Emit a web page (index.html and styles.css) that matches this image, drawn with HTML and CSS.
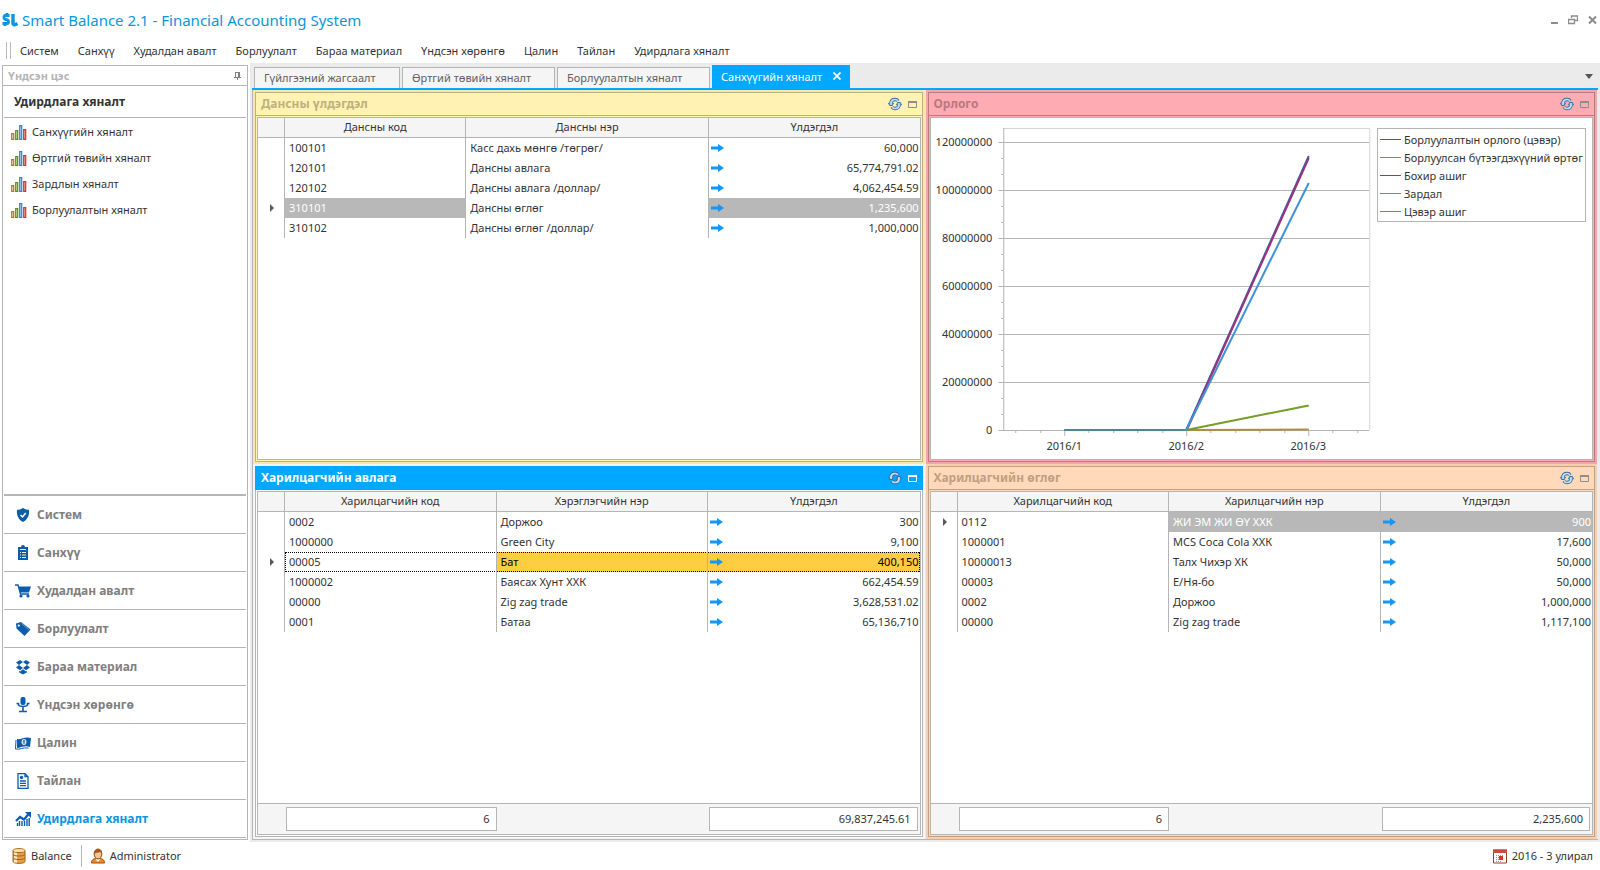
FILE: index.html
```
<!DOCTYPE html>
<html lang="mn">
<head>
    <meta charset="UTF-8">
    <meta name="viewport" content="width=device-width, initial-scale=1.0">
    <title>Smart Balance 2.1</title>
    <link rel="stylesheet" href="styles.css">
</head>
<body>
    <svg class="sprite">
        <symbol id="arrow" viewBox="0 0 13 8">
            <path d="M0 2.500h7V0l6 4-6 4V5.500H0z" fill="#1296f8"/>
        </symbol>
        <symbol id="mark" viewBox="0 0 4 8">
            <path d="M0 0l4 4-4 4z" fill="#5a5a5a"/>
        </symbol>
        <symbol id="refresh" viewBox="0 0 14 14">
            <path d="M3 9V6.500C3 4 4.500 2.500 7 2.500c1.500 0 2.500.5 3 1.500M11 5v2.500C11 10 9.500 11.500 7 11.500c-1.500 0-2.500-.5-3-1.500" fill="none" stroke="#3a6fa0" stroke-width="3.400"/>
            <path d="M0 7h6L3 3.500zM8 7h6l-3 3.500z" fill="#5e9dcc" stroke="#3a6fa0" stroke-width=".6"/>
            <path d="M3 8V6.500C3 4 4.500 2.500 7 2.500c1.500 0 2.300.5 2.800 1.200M11 6v1.500C11 10 9.500 11.500 7 11.500c-1.500 0-2.300-.5-2.800-1.200" fill="none" stroke="#c4e3fa" stroke-width="1.700"/>
        </symbol>
        <symbol id="maximize" viewBox="0 0 9 7">
            <path d="M.5 1v5.500h8V1" fill="none" stroke="currentColor"/>
            <path d="M0 0h9v2H0z" fill="currentColor"/>
        </symbol>
        <symbol id="bars" viewBox="0 0 16 15">
            <path d="M.7 8.700h2v5.600h-2z" fill="#fbe3b8" stroke="#b8742a" stroke-width="1.200"/>
            <path d="M4.700 5.700h2v8.600h-2z" fill="#c5e59a" stroke="#548f2c" stroke-width="1.200"/>
            <path d="M8.700.7h2v13.600h-2z" fill="#b5d9f8" stroke="#3f7fc4" stroke-width="1.200"/>
            <path d="M12.700 4.700h2v9.600h-2z" fill="#f3a89e" stroke="#c23b36" stroke-width="1.200"/>
        </symbol>
    </svg>

    <header class="titlebar">
        <svg class="logo" viewBox="0 0 16 14">
            <path d="M7.500 2.500H3.300C1.500 2.500 1.500 6 3.300 6.300l2 .6C7 7.500 7 10.500 5 10.500H.5M5 0v2.500M3 10v3" fill="none" stroke="#0a97dd" stroke-width="2.800"/>
            <path d="M11 1v9.500c0 1 1 1.500 2 1.200l2.500-1.200" fill="none" stroke="#0a97dd" stroke-width="3.400"/>
        </svg>
        <h1>Smart Balance 2.1 - Financial Accounting System</h1>
        <div class="window-buttons">
            <button aria-label="Minimize"><svg width="7" height="10" viewBox="0 0 7 10"><path d="M0 7h7v2H0z" fill="#8c8c8c"/></svg></button>
            <button aria-label="Restore"><svg width="10" height="10" viewBox="0 0 10 10"><path d="M3.500 3V1h6v4.500H7M.5 4.500h6v4h-6zM3 1h7M0 4.500h7" fill="none" stroke="#8c8c8c" stroke-width="1.300"/></svg></button>
            <button aria-label="Close"><svg width="9" height="10" viewBox="0 0 9 10"><path d="M1 1.500l7 7M8 1.500l-7 7" stroke="#8c8c8c" stroke-width="2"/></svg></button>
        </div>
    </header>

    <nav class="menubar">
        <a href="#">Систем</a>
        <a href="#">Санхүү</a>
        <a href="#">Худалдан авалт</a>
        <a href="#">Борлуулалт</a>
        <a href="#">Бараа материал</a>
        <a href="#">Үндсэн хөрөнгө</a>
        <a href="#">Цалин</a>
        <a href="#">Тайлан</a>
        <a href="#">Удирдлага хяналт</a>
    </nav>

    <div class="main">
        <aside class="sidebar">
            <div class="sidebar-title">
                <span>Үндсэн цэс</span>
                <button aria-label="Pin"><svg width="7" height="8" viewBox="0 0 7 8"><path d="M1.500 0v5M0 5.500h7M3.500 5v3M1.500.5H5" fill="none" stroke="#808080"/><path d="M4 0h2v5H4z" fill="#808080"/></svg></button>
            </div>
            <div class="sidebar-body">
                <h2>Удирдлага хяналт</h2>
                <ul class="links">
                    <li><a href="#"><svg><use href="#bars"/></svg>Санхүүгийн хяналт</a></li>
                    <li><a href="#"><svg><use href="#bars"/></svg>Өртгий төвийн хяналт</a></li>
                    <li><a href="#"><svg><use href="#bars"/></svg>Зардлын хяналт</a></li>
                    <li><a href="#"><svg><use href="#bars"/></svg>Борлуулалтын хяналт</a></li>
                </ul>
                <div class="groups">
                    <button>
                        <svg viewBox="0 0 16 16"><path d="M8 1c2 1.300 4 1.800 6 1.800C14.500 8 13 12.500 8 15 3 12.500 1.500 8 2 2.800 4 2.800 6 2.300 8 1z"/><path d="M5.500 8l2 2 3.200-4" fill="none" stroke="#fff" stroke-width="1.500"/></svg>
                        Систем
                    </button>
                    <button>
                        <svg viewBox="0 0 16 16"><path d="M3 2h3a2 2 0 0 1 4 0h3v13H3z"/><path d="M5 4.500h6M5 7.500h1M7 7.500h4M5 10h1M7 10h4M5 12.500h1M7 12.500h4" stroke="#fff" stroke-width=".9"/></svg>
                        Санхүү
                    </button>
                    <button>
                        <svg viewBox="0 0 16 16"><path d="M3.500 3.500H16l-2 6H5z"/><path d="M0 2h3l2.500 9H14" fill="none" stroke="#0b5cad" stroke-width="1.300"/><circle cx="6" cy="13" r="1.600"/><circle cx="13" cy="13" r="1.600"/></svg>
                        Худалдан авалт
                    </button>
                    <button>
                        <svg viewBox="0 0 16 16"><path d="M1 2.500l5-1.500 9.500 7.500-6 6.500-8-7.500z"/><circle cx="3.800" cy="4.600" r="1.100" fill="#fff"/><path d="M6.500 2.500l7.500 6.500" stroke="#8ab3de" stroke-width=".7"/></svg>
                        Борлуулалт
                    </button>
                    <button>
                        <svg viewBox="0 0 16 16"><path d="M5 1l3 2-4 3-3-2.500zM11 1L8 3l4 3 3-2.500zM1 8.500L4 6l4 3-3 2.300zM15 8.500L12 6 8 9l3 2.300zM4 12l1 .6L8 10.300l3 2.300 1-.6v1.200L8 15.500l-4-2.300z"/></svg>
                        Бараа материал
                    </button>
                    <button>
                        <svg viewBox="0 0 16 16"><rect x="5.500" y="0" width="5" height="8" rx="2"/><path d="M1.500 6.500h2v1.500c1.500 2 7.500 2 9 0V6.500h2M8 9v5M4 14.500h8" fill="none" stroke="#0b5cad" stroke-width="1.600"/></svg>
                        Үндсэн хөрөнгө
                    </button>
                    <button>
                        <svg viewBox="0 0 16 16"><path d="M2 4c4 1 8-3 14-1l-1 9c-6-2-9 1-13 1z"/><path d="M1 5L.5 14c5 1 7-2 13-1" fill="none" stroke="#0b5cad"/><ellipse cx="9" cy="7" rx="2.500" ry="3" fill="#d7e6f5"/><path d="M9 5v4M8 6h1.500" stroke="#0b5cad"/></svg>
                        Цалин
                    </button>
                    <button>
                        <svg viewBox="0 0 16 16"><path d="M3 .7h7l3 3v11.600H3zM10 .7v3h3" fill="#fff" stroke="#0b5cad" stroke-width="1.300"/><circle cx="6.500" cy="4.500" r="1.700"/><path d="M5 8h6M5 10.300h6M5 12.600h6" stroke="#0b5cad" stroke-width="1.300"/></svg>
                        Тайлан
                    </button>
                    <button class="active">
                        <svg viewBox="0 0 16 16"><path d="M1 10l4-4 4 2.500 5-6" fill="none" stroke="#0b5cad" stroke-width="2.200"/><path d="M10 1h6v6z"/><path d="M4.500 15v-5M7 15v-5M9.500 15v-5M12 15V8M14.200 15V7M2.500 15v-3" stroke="#0b5cad" stroke-width="1.400"/></svg>
                        Удирдлага хяналт
                    </button>
                </div>
            </div>
        </aside>

        <main class="workspace">
            <div class="tabs">
                <button class="tab">Гүйлгээний жагсаалт</button>
                <button class="tab tab-wide">Өртгий төвийн хяналт</button>
                <button class="tab tab-wide">Борлуулалтын хяналт</button>
                <button class="tab active">Санхүүгийн хяналт
                    <svg width="8" height="8" viewBox="0 0 8 8"><path d="M.5.5l7 7M7.500.5l-7 7" stroke="#fff" stroke-width="1.700"/></svg>
                </button>
                <button class="tab-list" aria-label="Tabs"><svg width="8" height="5" viewBox="0 0 8 5"><path d="M0 0h8L4 5z" fill="#555"/></svg></button>
            </div>

            <div class="panels">
                <section class="panel yellow">
                    <div class="panel-title">
                        <h3>Дансны үлдэгдэл</h3>
                        <button aria-label="Refresh"><svg class="refresh"><use href="#refresh"/></svg></button>
                        <button aria-label="Maximize"><svg class="maximize"><use href="#maximize"/></svg></button>
                    </div>
                    <div class="panel-body">
                        <table>
                            <thead>
                                <tr><th class="col-mark"></th><th class="col-code">Дансны код</th><th class="col-name">Дансны нэр</th><th>Үлдэгдэл</th></tr>
                            </thead>
                            <tbody>
                                <tr><td></td><td>100101</td><td>Касс дахь мөнгө /төгрөг/</td><td><svg><use href="#arrow"/></svg>60,000</td></tr>
                                <tr><td></td><td>120101</td><td>Дансны авлага</td><td><svg><use href="#arrow"/></svg>65,774,791.02</td></tr>
                                <tr><td></td><td>120102</td><td>Дансны авлага /доллар/</td><td><svg><use href="#arrow"/></svg>4,062,454.59</td></tr>
                                <tr><td><svg class="mark"><use href="#mark"/></svg></td><td class="selected">310101</td><td>Дансны өглөг</td><td class="selected"><svg><use href="#arrow"/></svg>1,235,600</td></tr>
                                <tr><td></td><td>310102</td><td>Дансны өглөг /доллар/</td><td><svg><use href="#arrow"/></svg>1,000,000</td></tr>
                            </tbody>
                        </table>
                    </div>
                </section>

                <section class="panel pink">
                    <div class="panel-title">
                        <h3>Орлого</h3>
                        <button aria-label="Refresh"><svg class="refresh"><use href="#refresh"/></svg></button>
                        <button aria-label="Maximize"><svg class="maximize"><use href="#maximize"/></svg></button>
                    </div>
                    <div class="panel-body chart">
                        <svg class="plot" viewBox="0 0 440 341">
                            <path d="M72 10.500h366.500V312" class="frame"/>
                            <!-- grid lines and major ticks -->
                            <path d="M67 24.500h371M67 72.500h371M67 120.500h371M67 168.500h371M67 216.500h371M67 264.500h371M67 312.500h371M72.500 10v302M133.500 312v6M255.500 312v6M377.500 312v6" class="axis"/>
                            <!-- minor ticks -->
                            <path d="M70 40.500h2M70 56.500h2M70 88.500h2M70 104.500h2M70 136.500h2M70 152.500h2M70 184.500h2M70 200.500h2M70 232.500h2M70 248.500h2M70 280.500h2M70 296.500h2M84.500 312v3M109.500 312v3M157.500 312v3M182.500 312v3M206.500 312v3M231.500 312v3M279.500 312v3M304.500 312v3M328.500 312v3M353.500 312v3M401.500 312v3M426.500 312v3" class="axis"/>
                            <g class="y-labels">
                                <text x="61" y="28">120000000</text>
                                <text x="61" y="76">100000000</text>
                                <text x="61" y="124">80000000</text>
                                <text x="61" y="172">60000000</text>
                                <text x="61" y="220">40000000</text>
                                <text x="61" y="268">20000000</text>
                                <text x="61" y="316">0</text>
                            </g>
                            <g class="x-labels">
                                <text x="133" y="332">2016/1</text>
                                <text x="255" y="332">2016/2</text>
                                <text x="377" y="332">2016/3</text>
                            </g>
                            <g class="series">
                                <path d="M133 312h122L377.500 38" stroke="#2b69ae"/>
                                <path d="M133 312h122l122.500-.5" stroke="#b08a4a"/>
                                <path d="M255.500 312l122-272" stroke="#a0307a"/>
                                <path d="M255 312l122.500-24.500" stroke="#739e24"/>
                                <path d="M255 312L377.500 65" stroke="#3f92d8"/>
                                <path d="M133 312h122" stroke="#4f8790"/>
                            </g>
                        </svg>
                        <ul class="legend">
                            <li class="s1">Борлуулалтын орлого (цэвэр)</li>
                            <li class="s2">Борлуулсан бүтээгдэхүүний өртөг</li>
                            <li class="s3">Бохир ашиг</li>
                            <li class="s4">Зардал</li>
                            <li class="s5">Цэвэр ашиг</li>
                        </ul>
                    </div>
                </section>

                <section class="panel blue">
                    <div class="panel-title">
                        <h3>Харилцагчийн авлага</h3>
                        <button aria-label="Refresh"><svg class="refresh"><use href="#refresh"/></svg></button>
                        <button aria-label="Maximize"><svg class="maximize"><use href="#maximize"/></svg></button>
                    </div>
                    <div class="panel-body">
                        <table>
                            <thead>
                                <tr><th class="col-mark"></th><th>Харилцагчийн код</th><th>Хэрэглэгчийн нэр</th><th>Үлдэгдэл</th></tr>
                            </thead>
                            <tbody>
                                <tr><td></td><td>0002</td><td>Доржоо</td><td><svg><use href="#arrow"/></svg>300</td></tr>
                                <tr><td></td><td>1000000</td><td>Green City</td><td><svg><use href="#arrow"/></svg>9,100</td></tr>
                                <tr class="focused"><td><svg class="mark"><use href="#mark"/></svg></td><td>00005</td><td class="current">Бат</td><td class="current"><svg><use href="#arrow"/></svg>400,150</td></tr>
                                <tr><td></td><td>1000002</td><td>Баясах Хунт ХХК</td><td><svg><use href="#arrow"/></svg>662,454.59</td></tr>
                                <tr><td></td><td>00000</td><td>Zig zag trade</td><td><svg><use href="#arrow"/></svg>3,628,531.02</td></tr>
                                <tr><td></td><td>0001</td><td>Батаа</td><td><svg><use href="#arrow"/></svg>65,136,710</td></tr>
                            </tbody>
                        </table>
                        <div class="summary">
                            <div class="count">6</div>
                            <div class="total">69,837,245.61</div>
                        </div>
                    </div>
                </section>

                <section class="panel orange">
                    <div class="panel-title">
                        <h3>Харилцагчийн өглөг</h3>
                        <button aria-label="Refresh"><svg class="refresh"><use href="#refresh"/></svg></button>
                        <button aria-label="Maximize"><svg class="maximize"><use href="#maximize"/></svg></button>
                    </div>
                    <div class="panel-body">
                        <table>
                            <thead>
                                <tr><th class="col-mark"></th><th>Харилцагчийн код</th><th>Харилцагчийн нэр</th><th>Үлдэгдэл</th></tr>
                            </thead>
                            <tbody>
                                <tr><td><svg class="mark"><use href="#mark"/></svg></td><td>0112</td><td class="selected">ЖИ ЭМ ЖИ ӨҮ ХХК</td><td class="selected"><svg><use href="#arrow"/></svg>900</td></tr>
                                <tr><td></td><td>1000001</td><td>MCS Coca Cola ХХК</td><td><svg><use href="#arrow"/></svg>17,600</td></tr>
                                <tr><td></td><td>10000013</td><td>Талх Чихэр ХК</td><td><svg><use href="#arrow"/></svg>50,000</td></tr>
                                <tr><td></td><td>00003</td><td>Е/Ня-бо</td><td><svg><use href="#arrow"/></svg>50,000</td></tr>
                                <tr><td></td><td>0002</td><td>Доржоо</td><td><svg><use href="#arrow"/></svg>1,000,000</td></tr>
                                <tr><td></td><td>00000</td><td>Zig zag trade</td><td><svg><use href="#arrow"/></svg>1,117,100</td></tr>
                            </tbody>
                        </table>
                        <div class="summary">
                            <div class="count">6</div>
                            <div class="total">2,235,600</div>
                        </div>
                    </div>
                </section>
            </div>
        </main>
    </div>

    <footer class="statusbar">
        <span class="status-item">
            <svg viewBox="0 0 14 16"><path d="M1 2.500C1 0 13 0 13 2.500v11c0 2.500-12 2.500-12 0z" fill="#e5a04a" stroke="#a5631c"/><path d="M3.500 2v12.500" stroke="#fde9bd" stroke-width="3"/><path d="M1 3c1 2 11 2 12 0M1 6.500c1 2 11 2 12 0M1 10c1 2 11 2 12 0" fill="none" stroke="#a5631c"/><ellipse cx="7" cy="2.500" rx="5.500" ry="1.500" fill="#fbe0a8"/></svg>
            Balance
        </span>
        <span class="status-item">
            <svg viewBox="0 0 14 16"><path d="M.5 15c0-3.500 2-4.500 6.500-4.500s6.500 1 6.500 4.500z" fill="#f08a24" stroke="#9c4a10"/><path d="M4.500 11l2.500 3 2.500-3z" fill="#fff"/><ellipse cx="7" cy="6" rx="3.800" ry="5" fill="#f3c48c" stroke="#8a4a18"/><path d="M3 5.500C2 0 12-1 11 5.500 9.500 3 6 5 3 5.500z" fill="#a45a1e"/></svg>
            Administrator
        </span>
        <span class="status-item period">
            <svg viewBox="0 0 14 16"><path d="M.5 2h13v13H.5z" fill="#fff" stroke="#9a3a30"/><path d="M0 1.500h14V5H0z" fill="#d0493a"/><path d="M3 7.500h8M3 9.500h8M3 11.500h8M3 13.500h5" stroke="#999" stroke-dasharray="1 1"/><path d="M6 8h4v4H6z" fill="#cf3a2c"/></svg>
            2016 - 3 улирал
        </span>
    </footer>
</body>
</html>
```
FILE: styles.css
```
* {
    box-sizing: border-box;
}
body {
    margin: 0;
    height: 100vh;
    display: flex;
    flex-direction: column;
    background: #fff;
    color: #333;
    font-family: "Noto Sans", Tahoma, sans-serif;
    font-size: 11px;
}
h1, h2, h3, ul {
    margin: 0;
    padding: 0;
    list-style: none;
}
a {
    color: inherit;
    text-decoration: none;
}
button {
    background: none;
    border: none;
    padding: 0;
    font: inherit;
    color: inherit;
    cursor: pointer;
}
svg {
    display: block;
    flex: none;
}
.sprite {
    display: none;
}

/* title and menu */
.titlebar {
    display: flex;
    align-items: center;
    height: 39px;
    padding: 0 3px 0 2px;
}
.logo {
    width: 16px;
    height: 14px;
    margin-right: 4px;
}
.titlebar h1 {
    flex: 1;
    color: #0a97dd;
    font-size: 15px;
    font-weight: normal;
}
.window-buttons {
    display: flex;
    gap: 10px;
}
.menubar {
    display: flex;
    align-items: center;
    gap: 19px;
    height: 24px;
    padding-bottom: 1px;
}
.menubar::before {
    content: "";
    width: 3px;
    height: 17px;
    margin: 0 -10px 0 6px;
    border: solid #b9b9b9;
    border-width: 0 1px;
}

.main {
    flex: 1;
    display: flex;
    min-height: 0;
}

/* left menu */
.sidebar {
    display: flex;
    flex-direction: column;
    width: 246px;
    margin: 2px;
    border: 1px solid #b5b5b5;
}
.sidebar-title {
    display: flex;
    justify-content: space-between;
    align-items: center;
    height: 20px;
    padding: 0 6px 0 5px;
    border-bottom: 1px solid #b5b5b5;
    color: #b5b5b5;
    font-weight: bold;
}
.sidebar-body {
    flex: 1;
    display: flex;
    flex-direction: column;
    padding: 0 1px 1px;
}
.sidebar h2 {
    height: 32px;
    padding-left: 10px;
    border-bottom: 1px solid #b5b5b5;
    font-size: 12px;
    line-height: 31px;
}
.links {
    flex: 1;
    padding-top: 1px;
}
.links a {
    display: flex;
    align-items: center;
    height: 26px;
    padding-left: 7px;
    line-height: 16px;
}
.links svg {
    width: 16px;
    height: 15px;
    margin-right: 5px;
}
.groups {
    border-top: 2px solid #b5b5b5;
}
.groups button {
    display: flex;
    align-items: center;
    gap: 6px;
    width: 100%;
    height: 38px;
    padding-left: 11px;
    border-bottom: 1px solid #b5b5b5;
    color: #808080;
    font-weight: bold;
    font-size: 12px;
}
.groups svg {
    width: 16px;
    height: 16px;
    fill: #0b5cad;
}
.groups .active {
    color: #0a97dd;
}

/* tabs */
.workspace {
    flex: 1;
    display: flex;
    flex-direction: column;
    min-width: 0;
    padding: 2px;
    background: #ebebeb;
}
.tabs {
    display: flex;
    align-items: flex-end;
    gap: 2px;
    height: 25px;
    padding-left: 2px;
    border-bottom: 2px solid #00a8ff;
}
.tab {
    width: 146px;
    height: 21px;
    padding: 0 0 1px 9px;
    border: 1px solid #b5b5b5;
    border-bottom: none;
    background: #f5f5f5;
    color: #606060;
    text-align: left;
}
.tab-wide {
    width: 153px;
}
.tab.active {
    display: flex;
    align-items: center;
    justify-content: space-between;
    width: 138px;
    height: 23px;
    padding-right: 9px;
    border: none;
    background: #00a8ff;
    color: #fff;
}
.tab-list {
    margin: 0 5px 9px auto;
}

/* panels */
.panels {
    flex: 1;
    display: grid;
    grid-template-columns: 1fr 1fr;
    grid-template-rows: 374fr 375fr;
    min-height: 0;
    border: solid #b5b5b5;
    border-width: 0 0 1px 1px;
}
.panel {
    display: flex;
    flex-direction: column;
    min-width: 0;
    min-height: 0;
    margin: 2px 3px 2px 2px;
    border: 1px solid;
}
.panel-title {
    display: flex;
    align-items: center;
    gap: 6px;
    height: 23px;
    padding: 0 5px;
    border-bottom: 1px solid;
    border-color: inherit;
}
.panel-title h3 {
    flex: 1;
    font-size: 12px;
    line-height: 22px;
}
.panel-title button {
    color: #8e8e8e;
}
.refresh {
    width: 14px;
    height: 14px;
}
.maximize {
    width: 9px;
    height: 7px;
}
.panel-body {
    flex: 1;
    display: flex;
    flex-direction: column;
    min-height: 0;
    margin: 1px;
    border: 1px solid #b5b5b5;
    background: #fff;
}
.yellow {
    background: #fff2b3;
    border-color: #bdb27c;
    color: #bdb27c;
    box-shadow: 0 0 0 2px #f5e8ac;
}
.pink {
    background: #ffabb3;
    border-color: #bb787e;
    color: #bb787e;
    box-shadow: 0 0 0 2px #f5a4ac;
}
.blue {
    background: #fff;
    border-color: #b5b5b5;
    color: #fff;
    box-shadow: 0 0 0 2px #f5f5f5;
}
.blue .panel-title {
    height: 24px;
    margin: -1px -1px 0;
    padding: 0 6px;
    background: #00a8ff;
    border-bottom: none;
}
.blue .panel-title button {
    color: #fff;
}
.orange {
    background: #ffd9b9;
    border-color: #c09f83;
    color: #c09f83;
    box-shadow: 0 0 0 2px #f5cfb0;
}

/* grids */
table {
    width: 100%;
    table-layout: fixed;
    border-collapse: separate;
    border-spacing: 0;
    color: #333;
}
th {
    height: 20px;
    padding: 0 0 2px;
    border: solid #b5b5b5;
    border-width: 0 1px 1px 0;
    background: #f5f5f5;
    font-weight: normal;
    line-height: 16px;
}
.col-mark {
    width: 27px;
}
.col-code {
    width: 27.4%;
}
.col-name {
    width: 36.7%;
}
td {
    height: 20px;
    padding: 0 3px 0 4px;
    border-right: 1px solid #b5b5b5;
    line-height: 18px;
    white-space: nowrap;
}
th:last-child, td:last-child {
    border-right: none;
}
td:last-child {
    padding: 0 1px 0 2px;
    text-align: right;
}
td svg {
    float: left;
    width: 13px;
    height: 8px;
    margin-top: 5px;
}
td .mark {
    float: none;
    width: 4px;
    margin: 0 0 0 8px;
}
.selected {
    background: #b8b8b8;
    color: #fff;
}
.current {
    background: #ffcd42;
    color: #000;
}
.focused td:not(:first-child) {
    background-image: linear-gradient(90deg, #000 50%, transparent 50%), linear-gradient(90deg, #000 50%, transparent 50%);
    background-size: 2px 1px;
    background-position: 0 0, 0 100%;
    background-repeat: repeat-x;
}
.focused td:nth-child(2) {
    border-left: 1px dotted #000;
    padding-left: 3px;
}
.focused td:last-child {
    border-right: 1px dotted #000;
    padding-right: 0;
}
.summary {
    display: grid;
    grid-template-columns: 27px 1fr 1fr 1fr;
    margin-top: auto;
    padding: 3px 0;
    border-top: 1px solid #b5b5b5;
    background: #f5f5f5;
    color: #333;
}
.summary div {
    height: 24px;
    margin-left: 1px;
    padding-right: 6px;
    border: 1px solid #b5b5b5;
    background: #fff;
    line-height: 22px;
    text-align: right;
}
.count {
    grid-column: 2;
}
.total {
    grid-column: 4;
    margin-right: 2px;
}

/* chart */
.chart {
    flex-direction: row;
    align-items: flex-start;
    justify-content: space-between;
    color: #333;
}
.plot {
    flex: 1;
    min-width: 0;
    max-height: 100%;
}
.plot text {
    fill: #333;
}
.y-labels {
    text-anchor: end;
}
.x-labels {
    text-anchor: middle;
}
.frame {
    fill: none;
    stroke: #d5d5d5;
}
.axis {
    stroke: #b5b5b5;
}
.series {
    fill: none;
    stroke-width: 2;
}
.legend {
    margin: 10px 6px 0;
    padding: 1px 2px;
    border: 1px solid #b5b5b5;
}
.legend li {
    display: flex;
    align-items: center;
    gap: 3px;
    height: 18px;
    white-space: nowrap;
}
.legend li::before {
    content: "";
    flex: none;
    width: 21px;
    height: 1px;
    background: currentColor;
}
.s1::before {
    color: #1b69b5;
}
.s2::before {
    color: #a8843c;
}
.s3::before {
    color: #a0307a;
}
.s4::before {
    color: #739e24;
}
.s5::before {
    color: #3f92d8;
}

/* status bar */
.statusbar {
    display: flex;
    align-items: center;
    height: 28px;
    padding: 0 7px 1px 12px;
}
.status-item {
    display: flex;
    align-items: center;
    gap: 5px;
    height: 22px;
}
.status-item svg {
    width: 14px;
    height: 16px;
}
.status-item + .status-item {
    margin-left: 9px;
    padding-left: 9px;
    border-left: 1px solid #b5b5b5;
}
.status-item.period {
    margin-left: auto;
    border-left: none;
}
```
